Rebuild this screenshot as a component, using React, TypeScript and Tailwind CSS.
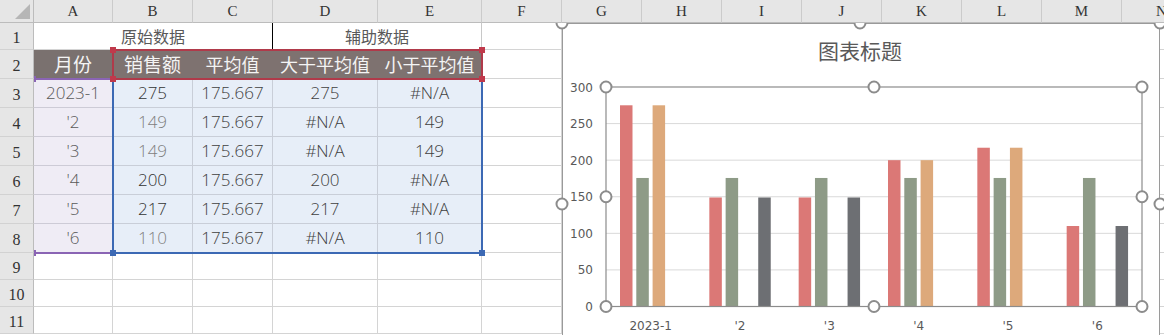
import React from "react";

const letters = ["A", "B", "C", "D", "E", "F", "G", "H", "I", "J", "K", "L", "M", "N"];

type Row = { a: string; b: string; c: string; d: string; e: string; bDark: boolean };
const data: Row[] = [
  { a: "2023-1", b: "275", c: "175.667", d: "275", e: "#N/A", bDark: true },
  { a: "'2", b: "149", c: "175.667", d: "#N/A", e: "149", bDark: false },
  { a: "'3", b: "149", c: "175.667", d: "#N/A", e: "149", bDark: false },
  { a: "'4", b: "200", c: "175.667", d: "200", e: "#N/A", bDark: true },
  { a: "'5", b: "217", c: "175.667", d: "217", e: "#N/A", bDark: true },
  { a: "'6", b: "110", c: "175.667", d: "#N/A", e: "110", bDark: false },
];

const cjk = { fontFamily: '"Noto Sans CJK SC", "Noto Sans", sans-serif' };
const num = { fontFamily: '"Open Sans", "Noto Sans CJK SC", sans-serif', fontWeight: 300 };
const serif = { fontFamily: '"Liberation Serif", "DejaVu Serif", serif' };

const base = "border-r border-b flex items-center justify-center overflow-hidden whitespace-nowrap";

function RowHead({ n }: { n: number }) {
  return (
    <div
      className="relative z-20 bg-[#e6e6e6] border-r border-b border-r-[#bcbcbc] border-b-[#d2d2d2] flex items-center justify-center text-[16px] text-[#333] pt-[3px]"
      style={serif}
    >
      {n}
    </div>
  );
}

function Empty({ n = 9 }: { n?: number }) {
  return (
    <>
      {Array.from({ length: n }).map((_, i) => (
        <div key={i} className="border-r border-b border-[#d4d4d4]" />
      ))}
    </>
  );
}

const catLabels = ["2023-1", "'2", "'3", "'4", "'5", "'6"];
const series: (number | null)[][] = [
  [275, 149, 149, 200, 217, 110],
  [175.667, 175.667, 175.667, 175.667, 175.667, 175.667],
  [275, null, null, 200, 217, null],
  [null, 149, 149, null, null, 110],
];
const colors = ["#db7876", "#8e9b87", "#dda97b", "#6d6f73"];

function Chart() {
  const x0 = 44;
  const x1 = 580;
  const y0 = 64;
  const y1 = 283.5;
  const sc = (y1 - y0) / 300;
  const cw = (x1 - x0) / 6;
  const ticks = [0, 50, 100, 150, 200, 250, 300];
  const handle = (cx: number, cy: number, k: string) => (
    <circle key={k} cx={cx} cy={cy} r={5.5} fill="#ffffff" stroke="#8c8c8c" strokeWidth={2} />
  );
  return (
    <div className="absolute left-[562px] top-[23px] w-[598px] h-[362px] z-10 bg-white">
      <svg width={598} height={362} className="overflow-visible absolute left-0 top-0">
        <rect x={0.5} y={0.5} width={597} height={361} fill="none" stroke="#9a9a9a" strokeWidth={1} />
        <text x={298} y={36} textAnchor="middle" fontSize={21} fill="#595959" style={cjk}>
          图表标题
        </text>
        {ticks.map((t) => (
          <g key={t}>
            {t > 0 && t < 300 && (
              <line x1={x0} x2={x1} y1={y1 - t * sc} y2={y1 - t * sc} stroke="#d9d9d9" strokeWidth={1} />
            )}
            <text
              x={31}
              y={y1 - t * sc + 4.5}
              textAnchor="end"
              fontSize={12}
              fill="#595959"
              style={{ fontFamily: '"DejaVu Sans", sans-serif' }}
            >
              {t}
            </text>
          </g>
        ))}
        {series.map((s, si) =>
          s.map((v, ci) =>
            v === null ? null : (
              <rect
                key={`${si}-${ci}`}
                x={x0 + ci * cw + 14 + si * 16.3}
                y={y1 - v * sc}
                width={12.5}
                height={v * sc}
                fill={colors[si]}
              />
            )
          )
        )}
        {catLabels.map((l, ci) => (
          <text
            key={l}
            x={x0 + ci * cw + cw / 2}
            y={307}
            textAnchor="middle"
            fontSize={12}
            fill="#595959"
            style={{ fontFamily: '"DejaVu Sans", sans-serif' }}
          >
            {l}
          </text>
        ))}
        <rect x={x0} y={y0} width={x1 - x0} height={y1 - y0} fill="none" stroke="#8c8c8c" strokeWidth={1.2} />
        {handle(x0, y0, "a")}
        {handle((x0 + x1) / 2, y0, "b")}
        {handle(x1, y0, "c")}
        {handle(x0, (y0 + y1) / 2, "d")}
        {handle(x1, (y0 + y1) / 2, "e")}
        {handle(x0, y1, "f")}
        {handle((x0 + x1) / 2, y1, "g")}
        {handle(x1, y1, "h")}
        {handle(0, 0, "i")}
        {handle(298, 0, "j")}
        {handle(598, 0, "k")}
        {handle(0, 181, "l")}
        {handle(598, 181, "m")}
      </svg>
    </div>
  );
}

export default function App() {
  return (
    <div className="relative w-[1164px] h-[335px] overflow-hidden bg-white">
      <div className="grid grid-cols-[34px_79px_80px_80px_105px_104px_80px_80px_80px_80px_80px_80px_80px_80px_80px] grid-rows-[23px_27px_29px_29px_29px_29px_29px_29px_29px_27px_27px_27px]">
        <div className="relative z-20 bg-[#e6e6e6] border-r border-b border-[#bcbcbc]">
          <svg width={34} height={23} className="absolute left-0 top-0">
            <polygon points="15,19 30,19 30,4" fill="#b6b6b6" />
          </svg>
        </div>
        {letters.map((l) => (
          <div
            key={l}
            className="relative z-20 bg-[#e6e6e6] border-r border-b border-r-[#cbcbcb] border-b-[#bcbcbc] flex items-center justify-center text-[15px] text-[#333]"
            style={serif}
          >
            {l}
          </div>
        ))}

        <RowHead n={1} />
        <div className={`${base} col-span-3 border-r-[#000000] border-b-[#d4d4d4] text-[16px] text-[#595959]`} style={cjk}>
          原始数据
        </div>
        <div className={`${base} col-span-2 border-r-[#c8c8c8] border-b-[#d4d4d4] text-[16px] text-[#595959]`} style={cjk}>
          辅助数据
        </div>
        <Empty />

        <RowHead n={2} />
        <div className={`${base} bg-[#7a716f] border-[#7a716f] text-[19px] text-[#f4f4f4]`} style={cjk}>
          月份
        </div>
        {["销售额", "平均值", "大于平均值", "小于平均值"].map((t, i) => (
          <div
            key={t}
            className={`${base} bg-[#7e7270] border-[#7e7270] ${i === 0 ? "text-[19px]" : "text-[18px]"} text-[#f4f4f4]`}
            style={cjk}
          >
            {t}
          </div>
        ))}
        <Empty />

        {data.map((r, i) => (
          <React.Fragment key={i}>
            <RowHead n={i + 3} />
            <div className={`${base} bg-[#efecf5] border-[#cdcbd6] text-[17px] text-[#595959]`} style={num}>
              {r.a}
            </div>
            <div
              className={`${base} bg-[#e7eef8] border-[#c9ced8] text-[17px] ${r.bDark ? "text-[#333333]" : "text-[#7f7f7f]"}`}
              style={num}
            >
              {r.b}
            </div>
            <div className={`${base} bg-[#e7eef8] border-[#c9ced8] text-[17px] text-[#404040]`} style={num}>
              {r.c}
            </div>
            <div className={`${base} bg-[#e7eef8] border-[#c9ced8] text-[17px] text-[#404040]`} style={num}>
              {r.d}
            </div>
            <div className={`${base} bg-[#e7eef8] border-[#c9ced8] text-[17px] text-[#404040]`} style={num}>
              {r.e}
            </div>
            <Empty />
          </React.Fragment>
        ))}

        {[9, 10, 11].map((n) => (
          <React.Fragment key={n}>
            <RowHead n={n} />
            <Empty n={14} />
          </React.Fragment>
        ))}
      </div>

      {/* chart-source range highlights (overlays) */}
      <div className="absolute left-[33px] top-[78px] w-[81px] h-[176px] border-t-2 border-b-2 border-[#8a64b4] z-[5]">
        <div className="absolute -left-[3px] -top-[4px] w-[6px] h-[6px] bg-[#8a64b4]" />
        <div className="absolute -left-[3px] -bottom-[4px] w-[6px] h-[6px] bg-[#8a64b4]" />
      </div>
      <div className="absolute left-[112px] top-[79px] w-[371px] h-[175px] border-2 border-t-0 border-[#3c69b4] z-[5]">
        <div className="absolute -left-[4px] -bottom-[4px] w-[6px] h-[6px] bg-[#3c69b4]" />
        <div className="absolute -right-[4px] -bottom-[4px] w-[6px] h-[6px] bg-[#3c69b4]" />
      </div>
      <div className="absolute left-[112px] top-[49px] w-[371px] h-[31px] border-2 border-[#b03a4a] z-[6]">
        <div className="absolute -left-[4px] -top-[4px] w-[6px] h-[6px] bg-[#c0394b]" />
        <div className="absolute -right-[4px] -top-[4px] w-[6px] h-[6px] bg-[#c0394b]" />
        <div className="absolute -left-[4px] -bottom-[4px] w-[6px] h-[6px] bg-[#c0394b]" />
        <div className="absolute -right-[4px] -bottom-[4px] w-[6px] h-[6px] bg-[#c0394b]" />
      </div>

      <Chart />
    </div>
  );
}
